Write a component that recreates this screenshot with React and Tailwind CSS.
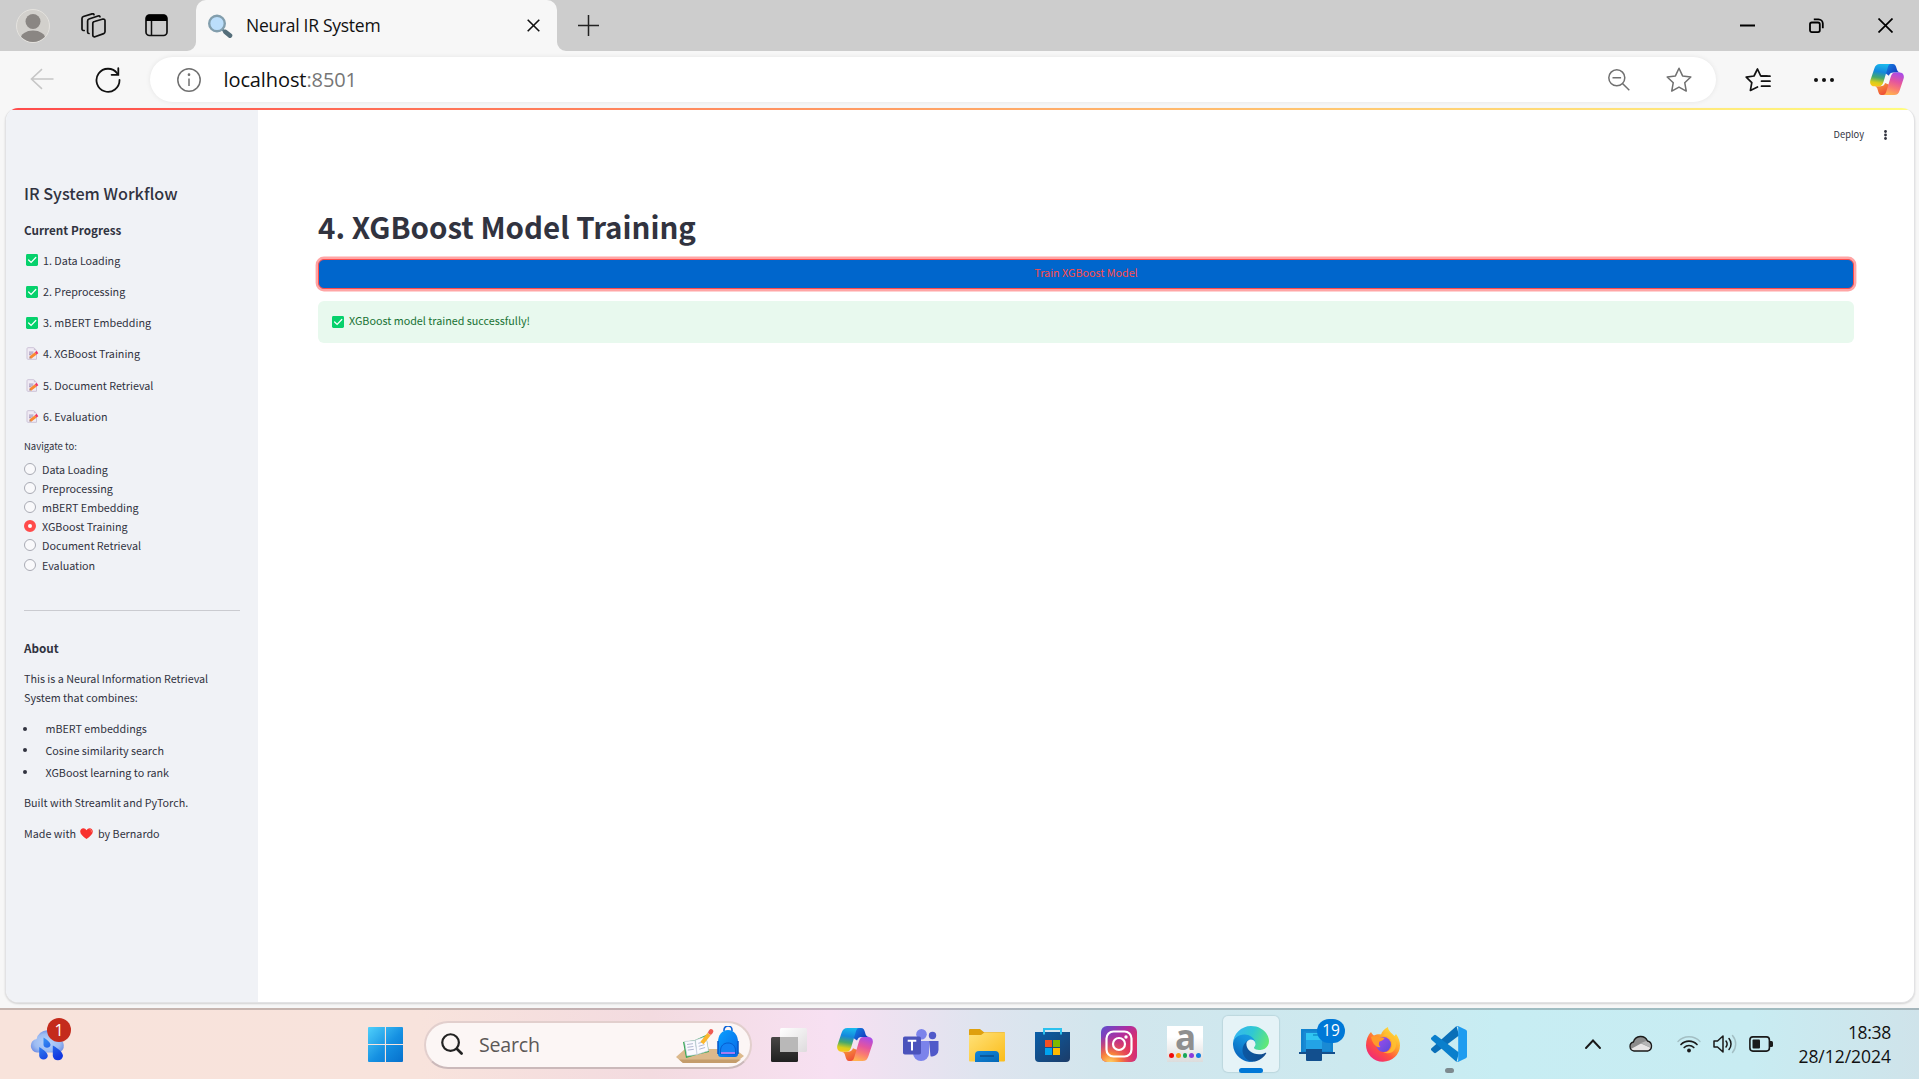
import React from "react";

const SANS = "font-['Noto_Sans_CJK_SC',sans-serif]";
const UI = "font-['Open_Sans',sans-serif]";

function Copilot({ id, className }) {
  return (
    <svg viewBox="0 0 36 34" className={className} preserveAspectRatio="none">
      <defs>
        <linearGradient id={id + "a"} x1="0.55" y1="0" x2="0.4" y2="1">
          <stop offset="0" stopColor="#1ab8ec" />
          <stop offset="0.35" stopColor="#1488dc" />
          <stop offset="0.62" stopColor="#46a86c" />
          <stop offset="0.85" stopColor="#d8ce1c" />
          <stop offset="1" stopColor="#f7c81a" />
        </linearGradient>
        <linearGradient id={id + "b"} x1="0.7" y1="0" x2="0.4" y2="1">
          <stop offset="0" stopColor="#a94be8" />
          <stop offset="0.4" stopColor="#e4559f" />
          <stop offset="0.7" stopColor="#fa7b72" />
          <stop offset="1" stopColor="#ffb152" />
        </linearGradient>
        <linearGradient id={id + "c"} x1="0" y1="0" x2="1" y2="0.7">
          <stop offset="0" stopColor="#1488e8" />
          <stop offset="1" stopColor="#1433b8" />
        </linearGradient>
        <linearGradient id={id + "d"} x1="0" y1="0" x2="0.7" y2="1">
          <stop offset="0" stopColor="#f8a43a" />
          <stop offset="1" stopColor="#ee4a38" />
        </linearGradient>
      </defs>
      <path d="M17 0h7c2.600 0 3.400 2 4 4.500.8 3 1.200 4.500 4 4.800h-7c-3 0-4 1.200-5 3.500L16 10z" fill={`url(#${id}c)`} />
      <path d="M19 34h-7c-2 0-2.800-2-3.500-4.500C7.700 26 7 24.600 4 24.400h7c3 0 4-1.200 5-3.500l5 2z" fill={`url(#${id}d)`} />
      <path d="M10.500 0H22c-2 0-2.700 2-3.400 4.600l-4.300 15c-1 3.200-2 4.900-4.800 4.900H5c-3.800 0-5.600-2.600-4.600-6.700L4.600 5C5.600 1.800 7.200 0 10.500 0z" fill={`url(#${id}a)`} />
      <path d="M25.500 34H14c2 0 2.800-2 3.500-4.600l4.300-15c1-3.300 2-5.100 4.700-5.100H31c3.800 0 5.600 2.600 4.600 6.700L31.400 29c-1 3.300-2.600 5-5.900 5z" fill={`url(#${id}b)`} />
    </svg>
  );
}

function TabStrip() {
  return (
    <div className="flex h-[51px] bg-[#cdcdcd]">
      <div className="flex w-[196px] items-center">
        <svg className="ml-4 h-[34px] w-[34px]" viewBox="0 0 34 34">
          <clipPath id="av"><circle cx="17" cy="17" r="16" /></clipPath>
          <circle cx="17" cy="17" r="16.500" fill="#d2d0cc" stroke="#e4e2de" />
          <g clipPath="url(#av)" fill="#8a8683">
            <ellipse cx="17" cy="12.500" rx="7.500" ry="7.500" />
            <ellipse cx="17" cy="30" rx="12.500" ry="8.500" />
          </g>
        </svg>
        <svg className="ml-[30.500px] size-[25px]" viewBox="0 0 25 25" fill="none" stroke="#111" strokeWidth="1.700" strokeLinecap="round" strokeLinejoin="round">
          <path d="M13.500 8.500 22 6a1.800 1.800 0 0 1 2 1.800v11a2 2 0 0 1-1.300 1.800L14 23.700a1.600 1.600 0 0 1-2.200-1.500V10.600a2 2 0 0 1 1.700-2.100z" />
          <path d="M8 20.500c-.8 0-1.400-.6-1.400-1.500V8c0-1 .5-1.700 1.400-2l9-3c1-.3 1.700 0 2 .8" />
          <path d="M3.200 17.500C1.600 17.500 1 17 1 16V5.500c0-1 .5-1.700 1.400-2L11 .9c1-.3 1.800 0 2 .8" />
        </svg>
        <svg className="ml-[39px] size-[23px]" viewBox="0 0 23 23">
          <rect x="1" y="1" width="21" height="20.500" rx="3.500" fill="none" stroke="#111" strokeWidth="1.700" />
          <path d="M1 7V4a3.500 3.500 0 0 1 3.500-3.500h14A3.500 3.500 0 0 1 22 4v3z" fill="#000" />
          <path d="M6.500 7v14" stroke="#111" strokeWidth="1.500" />
        </svg>
      </div>
      <div className="relative flex w-[361px] items-center rounded-t-[10px] bg-[#f7f7f7]">
        <svg className="absolute -left-[9px] bottom-0 size-[9px]" viewBox="0 0 9 9"><path d="M9 0v9H0a9 9 0 0 0 9-9z" fill="#f7f7f7" /></svg>
        <svg className="absolute -right-[9px] bottom-0 size-[9px]" viewBox="0 0 9 9"><path d="M0 0v9h9a9 9 0 0 1-9-9z" fill="#f7f7f7" /></svg>
        <svg className="ml-3 h-[24px] w-[25px]" viewBox="0 0 25 24">
          <path d="m13.500 14.500 3 3" stroke="#607d8b" strokeWidth="2.500" />
          <path d="m17.500 18 4.500 3.600" stroke="#546e7a" strokeWidth="4.600" strokeLinecap="round" />
          <circle cx="9" cy="9.500" r="7.800" fill="#bbdefb" stroke="#829ead" strokeWidth="2.400" />
        </svg>
        <span className={`${UI} ml-[13px] w-[281px] text-[17.5px] leading-none tracking-[-0.28px] text-[#111]`}>Neural IR System</span>
        <svg className="mr-[16px] size-[13px] shrink-0" viewBox="0 0 13 13"><path d="m.7.7 11.600 11.600M12.300.7.7 12.300" stroke="#111" strokeWidth="1.600" /></svg>
      </div>
      <div className="flex flex-1 items-center">
        <svg className="mb-px ml-[21px] size-[21px]" viewBox="0 0 21 21"><path d="M10.500 0v21M0 10.500h21" stroke="#222" strokeWidth="1.500" /></svg>
        <svg className="ml-auto h-[15px] w-[15px]" viewBox="0 0 15 15"><path d="M0 7.500h15" stroke="#000" strokeWidth="2" /></svg>
        <svg className="ml-[54px] size-[15px]" viewBox="0 0 15 15" fill="none" stroke="#000" strokeWidth="1.800">
          <rect x="1" y="4.500" width="9.800" height="9.600" rx="1.800" />
          <path d="M4.800 1.300h4.700a4.300 4.300 0 0 1 4.300 4.300v4.700" />
        </svg>
        <svg className="mr-[26px] ml-[54px] size-[15px]" viewBox="0 0 15 15"><path d="m.5.500 14 14m0-14-14 14" stroke="#000" strokeWidth="1.700" /></svg>
      </div>
    </div>
  );
}

const STAR = "M12 1.200l3.300 7 7.600 1-5.600 5.300 1.400 7.700L12 18.500l-6.700 3.700 1.400-7.700L1.100 9.200l7.600-1z";

function Toolbar() {
  return (
    <div className="flex h-[57px] items-center bg-[#f7f7f7]">
      <svg className="mb-[2px] ml-[30px] h-[22px] w-[24px]" viewBox="0 0 25 22" fill="none" stroke="#c6c6c6" strokeWidth="1.600"><path d="M24.500 11H1.500M12.500.700 1.500 11l11 10.300" /></svg>
      <svg className="ml-[41px] size-[26px]" viewBox="0 0 26 26" fill="none" stroke="#111" strokeWidth="1.800" strokeLinecap="round">
        <path d="M22.300 6.500A11.500 11.500 0 1 0 24.500 13" />
        <path d="M23.300 1.200v6.600h-6.700" />
      </svg>
      <div className="ml-[29px] flex h-[45px] w-[1566px] items-center rounded-full bg-white shadow-[0_0_5px_rgba(0,0,0,0.08)]">
        <svg className="ml-[27px] size-[24px]" viewBox="0 0 24 24" fill="none" stroke="#707070" strokeWidth="1.500">
          <circle cx="12" cy="12" r="11.200" /><path d="M12 10.500v7.500" /><circle cx="12" cy="6.700" r=".6" fill="#707070" />
        </svg>
        <span className={`${UI} ml-[22.500px] text-[20px] leading-none tracking-[-0.1px] text-[#111]`}>localhost<span className="text-[#767676]">:8501</span></span>
        <svg className="ml-auto size-[22px]" viewBox="0 0 22 22" fill="none" stroke="#707070" strokeWidth="1.500">
          <circle cx="8.800" cy="8.800" r="8" /><path d="M4.500 8.700h8.600M14.500 14.500l6.800 6.700" />
        </svg>
        <svg className="mr-[24.500px] ml-[36px] size-[26px]" viewBox="0 0 24 24" fill="none" stroke="#707070" strokeWidth="1.400" strokeLinejoin="round"><path d={STAR} /></svg>
      </div>
      <svg className="ml-[29px] h-[24px] w-[26px]" viewBox="0 0 26 24" fill="none" stroke="#111" strokeWidth="1.700" strokeLinejoin="round" strokeLinecap="round">
        <path d="M22 8h-6.300L12.500 1 9 8l-7.800 1.200 5.600 5.400-1.400 7.800L12.500 19" />
        <path d="M16.500 8.200H25M16.500 13.200H25M16.500 18.200H25" />
      </svg>
      <svg className="ml-[43px] h-[4px] w-[20px]" viewBox="0 0 20 4" fill="#111"><circle cx="2" cy="2" r="2" /><circle cx="10" cy="2" r="2" /><circle cx="18" cy="2" r="2" /></svg>
      <Copilot id="tb" className="ml-[36px] h-[31px] w-[34px]" />
    </div>
  );
}

function Check() {
  return (
    <svg className="size-[12px] shrink-0" viewBox="0 0 12 12">
      <rect width="12" height="12" rx="1.400" fill="#06d16c" />
      <path d="m2.600 6 2.500 2.500 4.700-5" fill="none" stroke="#fff" strokeWidth="1.200" strokeLinecap="round" />
    </svg>
  );
}

function Memo() {
  return (
    <svg className="size-[13px] shrink-0" viewBox="0 0 13 13">
      <path d="M2 .7h5.800L10.500 3.300v9H2a1 1 0 0 1-1-1v-9.600a1 1 0 0 1 1-1z" fill="#f0ebf4" stroke="#cdc4d8" strokeWidth="1" />
      <path d="M7.800.7v2.600h2.700z" fill="#cdc5d8" />
      <path d="M3 5h4.500M3 6.300h4M3 7.600h2.500" stroke="#b0a4c2" strokeWidth="1.100" />
      <path d="m4.300 10.600 5.500-4.300" stroke="#f98a30" strokeWidth="2.900" />
      <path d="m9.700 6.400 1.800-1.400" stroke="#f0386b" strokeWidth="2.900" />
      <path d="M3.400 11.500l.3-1.800 1.400 1.500z" fill="#8b5f4a" />
    </svg>
  );
}

const STEPS = [
  ["1. Data Loading", true],
  ["2. Preprocessing", true],
  ["3. mBERT Embedding", true],
  ["4. XGBoost Training", false],
  ["5. Document Retrieval", false],
  ["6. Evaluation", false],
];
const PAGES = ["Data Loading", "Preprocessing", "mBERT Embedding", "XGBoost Training", "Document Retrieval", "Evaluation"];
const FEATURES = ["mBERT embeddings", "Cosine similarity search", "XGBoost learning to rank"];

function Sidebar() {
  return (
    <aside className="h-full w-[252px] shrink-0 bg-[#f0f2f6] pt-[68px] pr-[18px] pl-[18px] text-[10.75px] leading-[19px] text-[#31333f]">
      <h2 className="h-[30px] text-[16.2px] leading-[30px] font-medium whitespace-nowrap">IR System Workflow</h2>
      <h3 className="mt-[7px] h-[30px] text-[11.7px] leading-[30px] font-bold">Current Progress</h3>
      <ul className="-mt-[0.2px] flex flex-col">
        {STEPS.map(([t, done]) => (
          <li key={t} className="flex h-[31.2px] items-center whitespace-nowrap">
            <span className="ml-[2px] flex w-[17px]">{done ? <Check /> : <Memo />}</span>
            {t}
          </li>
        ))}
      </ul>
      <p className="mt-[2.400px] h-[24px] text-[9.5px] leading-[24px]">Navigate to:</p>
      <div className="mt-[0.8px] flex flex-col">
        {PAGES.map((t) => (
          <label key={t} className="flex h-[19.2px] items-center whitespace-nowrap">
            {t === "XGBoost Training" ? (
              <span className="mr-[6px] size-[12px] rounded-full border-4 border-[#ff4b4b] bg-white" />
            ) : (
              <span className="mr-[6px] size-[12px] rounded-full border border-[#a9abb4] bg-[#f9f9fb]" />
            )}
            <span className="pt-[1px]">{t}</span>
          </label>
        ))}
      </div>
      <hr className="mt-[35.800px] border-t border-[#cacbd0]" />
      <h3 className="mt-[22px] h-[30px] text-[11.7px] leading-[30px] font-bold">About</h3>
      <p className="mt-[6px] whitespace-nowrap">This is a Neural Information Retrieval<br />System that combines:</p>
      <ul className="mt-[11px] flex flex-col">
        {FEATURES.map((t) => (
          <li key={t} className="flex h-[21.6px] items-center whitespace-nowrap">
            <span className="mr-[18.5px] -ml-px size-[4px] rounded-full bg-[#31333f]" />
            {t}
          </li>
        ))}
      </ul>
      <p className="mt-[10.600px]">Built with Streamlit and PyTorch.</p>
      <p className="mt-[12px] flex items-center">
        Made with
        <svg className="mr-[5px] ml-[4px] h-[11px] w-[13px]" viewBox="0 0 13 11"><path d="M6.500 11C3 8.500.2 6 .2 3.400.2 1.500 1.600.2 3.300.2c1.300 0 2.500.7 3.200 2C7.200.9 8.400.2 9.700.2c1.700 0 3.100 1.300 3.100 3.200C12.800 6 10 8.500 6.500 11z" fill="#f8312f" /><path d="M9.500 1.200c1.600.2 2.200 1.400 1.800 3" stroke="#ff7a6e" fill="none" /></svg>
        by Bernardo
      </p>
    </aside>
  );
}

function Page() {
  return (
    <div className="h-[900px] bg-[#f7f7f7] pr-[4px] pl-[5px]">
      <div className={`${SANS} flex h-[895px] flex-col overflow-hidden rounded-[13px] border-x border-b border-[#e2e2e4] bg-white shadow-[0_1px_2px_rgba(0,0,0,0.15)]`}>
        <div className="h-[2px] shrink-0 bg-[linear-gradient(90deg,#ff4b4b,#fffd80)]" />
        <div className="flex min-h-0 flex-1">
          <Sidebar />
          <main className="flex flex-1 flex-col text-[#31333f]">
            <div className="flex h-[50px] items-center justify-end">
              <span className="text-[9.3px] leading-none">Deploy</span>
              <svg className="mr-[27px] ml-[20px] h-[10px] w-[3px]" viewBox="0 0 3 10" fill="#31333f"><circle cx="1.500" cy="1.500" r="1.400" /><circle cx="1.500" cy="5" r="1.400" /><circle cx="1.500" cy="8.500" r="1.400" /></svg>
            </div>
            <div className="flex flex-col pr-[60px] pl-[60px]">
              <h1 className="mt-[41px] h-[50px] text-[29.5px] leading-[50px] font-bold">4. XGBoost Model Training</h1>
              <button className="mt-[8px] h-[30px] rounded-[6px] border border-[#ff4b4b] bg-[#0066cc] pb-[1px] text-[10.75px] leading-none text-[#ff4b4b] shadow-[0_0_0_2.400px_rgba(255,75,75,0.5)]">Train XGBoost Model</button>
              <div className="mt-[12px] flex h-[42px] items-center rounded-[6px] bg-[#e8f9ee] pl-[14px] text-[10.75px] leading-none text-[#177233]">
                <Check />
                <span className="ml-[5px] pb-[1px]">XGBoost model trained successfully!</span>
              </div>
            </div>
          </main>
        </div>
      </div>
    </div>
  );
}

function Slot({ children }) {
  return <div className="relative flex h-full w-[66px] shrink-0 items-center justify-center pt-[2px]">{children}</div>;
}

function Weather() {
  return (
    <div className="relative ml-[29px] h-full w-[45px]">
      <svg className="absolute top-[19px] left-[1px] h-[35px] w-[36px]" viewBox="0 0 36 35">
        <defs>
          <radialGradient id="wc" cx=".5" cy=".55" r=".55"><stop offset="0" stopColor="#b9d3fa" /><stop offset=".7" stopColor="#9dbcf2" /><stop offset="1" stopColor="#7594e6" /></radialGradient>
          <linearGradient id="wd" x1="0" y1="0" x2=".6" y2="1"><stop offset="0" stopColor="#3c9bf5" /><stop offset="1" stopColor="#1237e0" /></linearGradient>
        </defs>
        <path d="M7 25.500a6.800 6.800 0 0 1-.4-13.500A11 11 0 0 1 28 11.500a7.300 7.300 0 0 1 1 14z" fill="url(#wc)" />
        <path d="M13.500 10.500c4.500 3 7 5 7 7.500a3.600 3.600 0 0 1-7 0zM9.200 20c5.500 3.500 8.600 6 8.600 9a4.400 4.400 0 0 1-8.600 0zM22.800 18.500C29 22 33 25.500 33 29a5.200 5.200 0 0 1-10.200 0z" fill="url(#wd)" />
      </svg>
      <span className={`${UI} absolute top-[10px] left-[18px] flex size-[24px] items-center justify-center rounded-full bg-[#c42b1c] text-[16px] leading-none text-white`}>1</span>
    </div>
  );
}

function SearchBox() {
  return (
    <div className="mt-[2px] ml-[6px] flex h-[48px] w-[328px] shrink-0 items-center rounded-full border-2 border-[#e2cfcd] border-b-[#cbb9ba] bg-[#fcf6f5]">
      <svg className="mb-px ml-[15px] size-[22px]" viewBox="0 0 23 23" fill="none" stroke="#222" strokeLinecap="round"><circle cx="10" cy="10" r="8.700" strokeWidth="2.300" /><path d="m16.500 16.500 5 5" strokeWidth="2.800" /></svg>
      <span className={`${UI} ml-[16px] text-[19.6px] leading-none tracking-[-0.2px] text-[#5c5857]`}>Search</span>
      <svg className="mr-[6px] ml-auto h-[38px] w-[68px]" viewBox="0 0 68 38">
        <defs><linearGradient id="bp" x1="0" y1="0" x2="1" y2="1"><stop offset="0" stopColor="#0aa0ff" /><stop offset="1" stopColor="#0768e6" /></linearGradient></defs>
        <path d="M0 31l9-8h50l9 7-9 7H7z" fill="#dcb98c" /><path d="M3 33.500h62L60 37H7z" fill="#c49d6c" />
        <path d="m7 16 12-2 11-5 3 17-11 2.500L10 32z" fill="#35a853" />
        <path d="m8.500 15.500 10.500-1 2 14L11 30zM19.500 14 30 10.500l2.500 14.300L21 28.500z" fill="#fafaff" stroke="#c9cde0" strokeWidth=".6" />
        <path d="m11 18.500 6-.8m-5.600 3.600 6-.8m-5.600 3.600 6-.8m4.500-6 5.800-1.600m-5.400 4.600 5.800-1.700m-5.200 4.600 5.800-1.700" stroke="#9da6c4" strokeWidth=".8" />
        <path d="m26 17 7.500-9.500" stroke="#fbb62c" strokeWidth="4" /><path d="m32.800 8.200 1.600-2" stroke="#ddd" strokeWidth="4" /><path d="m34.400 6.300.7-.9" stroke="#ef5a52" strokeWidth="4.500" strokeLinecap="round" />
        <path d="M48 5V4a4 4 0 0 1 8 0v1" fill="none" stroke="#0a62d8" strokeWidth="1.600" />
        <path d="M42 16c0-7 4-12 10-12s10 5 10 12v12a3 3 0 0 1-3 3H45a3 3 0 0 1-3-3z" fill="url(#bp)" />
        <path d="M44.500 25c0-5 3-8 7.500-8s7.500 3 7.500 8v3h-15z" fill="#1282f5" stroke="#0552c4" strokeWidth=".8" /><path d="M45 27h14" stroke="#b77df2" strokeWidth="1.800" />
        <path d="M42 15v13M62 15v13" stroke="#0456c8" strokeWidth="1.500" />
      </svg>
    </div>
  );
}

function TaskIcons() {
  return (
    <>
      <Slot>
        <svg className="h-[34px] w-[36px]" viewBox="0 0 36 34">
          <defs>
            <linearGradient id="tv1" x1="0" y1="0" x2="0" y2="1"><stop offset="0" stopColor="#484645" /><stop offset="1" stopColor="#202020" /></linearGradient>
            <linearGradient id="tv2" x1="0" y1="0" x2="1" y2="1"><stop offset="0" stopColor="#fff" /><stop offset="1" stopColor="#dedbdd" /></linearGradient>
          </defs>
          <rect x="0" y="9" width="27" height="25" rx="1.500" fill="url(#tv1)" />
          <rect x="9" y="0" width="27" height="24" rx="1.500" fill="url(#tv2)" />
          <rect x="9" y="9" width="18" height="15" fill="#b9b8b8" />
        </svg>
      </Slot>
      <Slot><Copilot id="tk" className="mb-px h-[33px] w-[36px]" /></Slot>
      <Slot>
        <svg className="h-[34px] w-[36px]" viewBox="0 0 36 34">
          <circle cx="29.500" cy="7.500" r="3.700" fill="#5059c9" /><path d="M26 13h9.500v9a6.500 6.500 0 0 1-8 6.300z" fill="#5059c9" />
          <circle cx="18.500" cy="6.300" r="5.300" fill="#7b83eb" /><path d="M10 13h16v12a8 8 0 0 1-16 0z" fill="#7b83eb" />
          <rect x="0" y="8.500" width="18" height="18" rx="1.800" fill="#4b53bc" />
          <path d="M4.700 12.800h8.600M9 12.800V22.500" stroke="#fff" strokeWidth="2" />
        </svg>
      </Slot>
      <Slot>
        <svg className="h-[34px] w-[36px]" viewBox="0 0 36 34">
          <defs><linearGradient id="fe" x1="0" y1="0" x2="1" y2="1"><stop offset="0" stopColor="#ffe27a" /><stop offset="1" stopColor="#fbbc19" /></linearGradient><linearGradient id="fb" x1="0" y1="0" x2="1" y2="1"><stop offset="0" stopColor="#1287dc" /><stop offset="1" stopColor="#0568b6" /></linearGradient></defs>
          <path d="M0 2a1 1 0 0 1 1-1h10l4 3.200h20a1 1 0 0 1 1 1V9H0z" fill="#dfa00e" />
          <path d="M0 7h12l3.500-2.500H36V32.500a1 1 0 0 1-1 1H1a1 1 0 0 1-1-1z" fill="url(#fe)" />
          <path d="M6 34V27a4 4 0 0 1 4-4h16a4 4 0 0 1 4 4v7z" fill="url(#fb)" /><path d="M11 28h14" stroke="#0a4e8c" strokeWidth="1.500" />
        </svg>
      </Slot>
      <Slot>
        <svg className="mr-px h-[36px] w-[35px]" viewBox="0 0 35 36">
          <defs><linearGradient id="ms" x1="0" y1="0" x2="1" y2="1"><stop offset="0" stopColor="#0a5ea8" /><stop offset="1" stopColor="#1c3c68" /></linearGradient></defs>
          <path d="M0 5h35v26a4 4 0 0 1-4 4H4a4 4 0 0 1-4-4z" fill="url(#ms)" />
          <path d="M9 7.500V2h17v5.500" fill="none" stroke="#2bc1ee" strokeWidth="2" />
          <path d="M10 13h7v7h-7z" fill="#f25022" /><path d="M18 13h7v7h-7z" fill="#7fba00" /><path d="M10 21h7v7h-7z" fill="#00a4ef" /><path d="M18 21h7v7h-7z" fill="#ffb900" />
        </svg>
      </Slot>
      <Slot>
        <svg className="mb-px size-[36px]" viewBox="0 0 36 36">
          <defs>
            <linearGradient id="ig" x1="0" y1="0" x2="1" y2="1"><stop offset="0" stopColor="#5b4fd0" /><stop offset=".4" stopColor="#b02da0" /><stop offset=".7" stopColor="#e0305f" /><stop offset="1" stopColor="#c82d8c" /></linearGradient>
            <radialGradient id="ig2" cx=".25" cy="1.050" r=".8"><stop offset="0" stopColor="#ffdc6a" /><stop offset=".35" stopColor="#f9873a" /><stop offset="1" stopColor="#e0305f" stopOpacity="0" /></radialGradient>
          </defs>
          <rect width="36" height="36" rx="6" fill="url(#ig)" /><rect width="36" height="36" rx="6" fill="url(#ig2)" />
          <rect x="5.500" y="5.500" width="25" height="25" rx="7" fill="none" stroke="#fff" strokeWidth="2.200" />
          <circle cx="18" cy="18" r="6" fill="none" stroke="#fff" strokeWidth="2.200" /><circle cx="25" cy="11" r="1.700" fill="#fff" />
        </svg>
      </Slot>
      <Slot>
        <div className="relative mb-px h-[36px] w-[36px] bg-[linear-gradient(180deg,#ffffff_30%,#dcdcdc)]">
          <span className="absolute top-[-7px] left-[8px] font-['Open_Sans',sans-serif] text-[35px] leading-[35px] font-bold text-[#8f8f8f]">a</span>
          <div className="absolute top-[27px] left-[2px] flex gap-[2px]">
            <i className="size-[4.800px] rounded-full bg-[#f00a0a]" /><i className="size-[4.800px] rounded-full bg-[#f59b14]" /><i className="size-[4.800px] rounded-full bg-[#17a858]" /><i className="size-[4.800px] rounded-full bg-[#8b3bdc]" /><i className="size-[4.800px] rounded-full bg-[#117ee0]" />
          </div>
        </div>
      </Slot>
      <Slot>
        <div className="mb-px flex h-[56px] w-[56px] items-center justify-center rounded-[5px] bg-[#e5f3f7] shadow-[0_0_1px_1px_rgba(120,150,160,0.2)]">
          <svg className="size-[36px]" viewBox="0 0 256 256">
            <defs>
              <linearGradient id="e1" x1="60" y1="177" x2="240" y2="177" gradientUnits="userSpaceOnUse"><stop offset="0" stopColor="#0c59a4" /><stop offset="1" stopColor="#114a8b" /></linearGradient>
              <linearGradient id="e2" x1="150" y1="60" x2="45" y2="230" gradientUnits="userSpaceOnUse"><stop offset="0" stopColor="#1b9de2" /><stop offset=".3" stopColor="#1595df" /><stop offset="1" stopColor="#0a66bd" /></linearGradient>
              <linearGradient id="e3" x1="20" y1="40" x2="250" y2="140" gradientUnits="userSpaceOnUse"><stop offset="0" stopColor="#34b6f0" /><stop offset=".45" stopColor="#30c8d2" /><stop offset="1" stopColor="#66eb6e" /></linearGradient>
            </defs>
            <path fill="url(#e1)" d="M231.100 190.500c-3.400 1.800-6.900 3.400-10.500 4.700-11.600 4.300-23.800 6.500-36.200 6.500-47.700 0-89.300-32.800-89.300-75 .1-11.500 6.400-22.100 16.500-27.700-43.200 1.800-54.300 46.800-54.300 73.100 0 74.600 68.700 82.100 83.500 82.100 8 0 20-2.300 27.200-4.600l1.300-.4c27.600-9.500 51-28.100 66.600-52.800 1.100-1.900.5-4.300-1.300-5.400-1.100-.7-2.400-.7-3.500-.5z" />
            <path fill="url(#e2)" d="M105.700 241.400c-9-5.600-16.800-12.900-22.900-21.600-26.300-36-18.400-86.500 17.600-112.800 3.800-2.700 7.700-5.200 11.900-7.200 3.100-1.500 8.400-4.100 15.500-4 10.100.1 19.600 4.900 25.700 13 4 5.400 6.300 11.900 6.400 18.700 0-.2 24.500-79.600-80-79.600-43.900 0-80 41.600-80 78.200-.2 19.300 4 38.500 12.100 56 27.600 58.800 94.800 87.600 156.400 67.100-21.100 6.600-44.100 3.700-62.700-7.800z" />
            <path fill="url(#e3)" d="M152.300 148.900c-.8 1-3.300 2.500-3.300 5.700 0 2.600 1.700 5.100 4.700 7.200 14.400 10 41.500 8.700 41.600 8.700 10.700 0 21.100-2.900 30.300-8.300 18.800-11 30.400-31.100 30.400-52.900.3-22.400-8-37.300-11.300-43.900C223.500 23.900 177.700 0 128 0 58 0 1 56.200 0 126.200c.5-36.500 36.800-66 80-66 3.500 0 23.500.3 42 10.100 16.300 8.600 24.900 18.900 30.800 29.200 6.200 10.700 7.300 24.100 7.300 29.500-.1 5.400-2.800 13.300-7.800 19.900z" />
          </svg>
        </div>
        <span className="absolute bottom-[6px] left-[21px] h-[5px] w-[24px] rounded-full bg-[#0078d7]" />
      </Slot>
      <Slot>
        <svg className="h-[32px] w-[36px]" viewBox="0 0 36 32">
          <path d="M2 0h32v24H2z" fill="#1183cf" /><path d="M4.500 2.500h27V22h-27z" fill="#1a8ad4" /><path d="M0 23h36v2H0z" fill="#144f8c" />
          <path d="M7 4h16v7H7z" fill="#30c5f2" /><path d="M7 11h16v9H7z" fill="#23a3e6" /><path d="M7 20h16v11a1 1 0 0 1-1 1H8a1 1 0 0 1-1-1z" fill="#124f8e" /><path d="M14 6h6" stroke="#0a86c4" strokeWidth="1.200" />
        </svg>
        <span className={`${UI} absolute top-[11px] right-[5px] flex h-[24px] w-[28px] items-center justify-center rounded-full bg-[#0078d7] text-[15.500px] leading-none text-white`}>19</span>
      </Slot>
      <Slot>
        <svg className="mb-px h-[35px] w-[34px]" viewBox="0 0 34 35">
          <defs>
            <linearGradient id="ff1" x1=".85" y1=".1" x2=".2" y2=".95"><stop offset="0" stopColor="#ffe13a" /><stop offset=".35" stopColor="#ffa22e" /><stop offset=".65" stopColor="#ff5140" /><stop offset="1" stopColor="#f0287a" /></linearGradient>
            <linearGradient id="ff2" x1="0" y1="0" x2="1" y2="1"><stop offset="0" stopColor="#a44cf0" /><stop offset="1" stopColor="#5a4bd8" /></linearGradient>
          </defs>
          <path d="M5 5c1 2 2 3 3 3.500C10 7.500 13 7 15 7.500c1-3 3.500-6 7-7.500 0 4 4 6 6.500 9l1.500-2c3 4 4 8 4 11.500A17 16.500 0 0 1 0 18c0-5 2-10 5-13z" fill="url(#ff1)" />
          <circle cx="17.500" cy="17.500" r="7.500" fill="url(#ff2)" />
          <path d="M5 10c2-1.500 5-1.500 8 0l5.500 1c-.5 2-3 3-5 3.500-1 2-1 4 1 5.500-4 1-8-3-9.500-10z" fill="#ff9a2b" />
          <path d="M17 9c5-1 9 2 9 8 0 5-4 8.500-9 8.500 9 3 14-3 13-10C28 10 25 7 22 5c-2 1-4 2-5 4z" fill="#ffc230" opacity=".8" />
        </svg>
      </Slot>
      <Slot>
        <svg className="mb-px size-[36px]" viewBox="0 0 36 36">
          <path d="M25.500 0 28 9.500 5 26.700a1.500 1.500 0 0 1-2 0L.5 24.500a1.500 1.500 0 0 1 0-2.200z" fill="#0a6fb8" />
          <path d="M25.500 36 28 26.500 5 9.300a1.500 1.500 0 0 0-2 0L.5 11.500a1.500 1.500 0 0 0 0 2.200z" fill="#0a7fcc" />
          <path d="M25.500.2C26 0 27 0 27.500.3l7.300 3.500A2 2 0 0 1 36 5.600v24.800a2 2 0 0 1-1.200 1.800l-7.300 3.500c-.6.300-1.500.3-2 .1 1 0 1.700-.8 1.700-1.800V2c0-1-.7-1.800-1.700-1.800z" fill="#1f9cf0" />
        </svg>
        <span className="absolute bottom-[6px] left-[29px] h-[5px] w-[9px] rounded-full bg-[#7d8a8f]" />
      </Slot>
    </>
  );
}

function Tray() {
  return (
    <div className="ml-auto flex h-full items-center text-[#111]">
      <svg className="mr-[28px] h-[10px] w-[16px]" viewBox="0 0 16 10"><path d="m1 9 7-7.500L15 9" fill="none" stroke="#1a1a1a" strokeWidth="1.900" strokeLinecap="round" /></svg>
      <svg className="mr-[24px] h-[17px] w-[24px]" viewBox="0 0 24 17">
        <clipPath id="cl"><path d="M5 16a4.600 4.600 0 0 1-.6-9A7.500 7.500 0 0 1 18.500 6 5.200 5.200 0 0 1 19 16z" /></clipPath>
        <g clipPath="url(#cl)"><path d="M0 0h24v17H0z" fill="#8c8c8c" /><path d="m24 3-12 5 12 6z" fill="#b5b5b5" /><path d="m0 15 12-6.500L24 14v3H0z" fill="#e8e6e6" /></g>
        <path d="M5 16a4.600 4.600 0 0 1-.6-9A7.500 7.500 0 0 1 18.500 6 5.200 5.200 0 0 1 19 16z" fill="none" stroke="#1a1a1a" strokeWidth="1.300" />
      </svg>
      <svg className="mr-[12px] h-[18px] w-[24px]" viewBox="0 0 24 18" fill="none" strokeLinecap="round" strokeWidth="1.700">
        <path d="M1 6.500a15 15 0 0 1 22 0" stroke="#a3bfc4" strokeWidth="1.400" />
        <path d="M4 9.500a11 11 0 0 1 16 0M7.200 12.500a6.800 6.800 0 0 1 9.600 0" stroke="#1a1a1a" /><circle cx="12" cy="15.500" r="1.900" fill="#1a1a1a" />
      </svg>
      <svg className="mr-[12px] h-[20px] w-[24px]" viewBox="0 0 24 20" fill="none" stroke="#1a1a1a" strokeWidth="1.500" strokeLinejoin="round" strokeLinecap="round">
        <path d="M1 7v6h3.500l5.500 5V2L4.500 7z" /><path d="M13 7a5 5 0 0 1 0 6M16 4.500a8.500 8.500 0 0 1 0 11" /><path d="M19.500 1.500a13 13 0 0 1 0 17" stroke="#a3bfc4" />
      </svg>
      <svg className="mr-[25px] h-[16px] w-[24px]" viewBox="0 0 24 16"><rect x=".9" y=".9" width="19.500" height="14.200" rx="3" fill="none" stroke="#1a1a1a" strokeWidth="1.600" /><rect x="3.500" y="3.500" width="7.500" height="9" rx="1" fill="#1a1a1a" /><path d="M21 5h1.500a1.500 1.500 0 0 1 1.500 1.500v3a1.500 1.500 0 0 1-1.500 1.500H21z" fill="#1a1a1a" /></svg>
      <div className={`${UI} mr-[28px] flex w-[93px] flex-col items-end text-[17.500px] leading-[24px] tracking-[-0.03px] whitespace-nowrap`}>
        <span className="tracking-[-0.3px]">18:38</span>
        <span>28/12/2024</span>
      </div>
    </div>
  );
}

export default function App() {
  return (
    <div className="h-[1079px] w-[1919px] overflow-hidden bg-[#f7f7f7]">
      <TabStrip />
      <Toolbar />
      <Page />
      <div className="relative flex h-[71px] items-center bg-[linear-gradient(90deg,#f8e3db_0,#f8e3dc_420px,#f3dbe0_650px,#f7e0f2_830px,#dfe4ef_980px,#d2e6ed_1100px,#cce9ef_1350px,#c7edf3_1500px,#c8ecf2_1750px,#cfe3ea_1919px)]">
        <div className="absolute inset-x-0 top-0 h-[2px] bg-black/20" />
        <Weather />
        <div className="ml-[278px] flex h-full items-center">
          <Slot>
            <svg className="size-[35px]" viewBox="0 0 35 35">
              <defs><linearGradient id="win" x1="0" y1="0" x2="35" y2="35" gradientUnits="userSpaceOnUse"><stop offset="0" stopColor="#4fd0fb" /><stop offset=".55" stopColor="#1590e2" /><stop offset="1" stopColor="#0670cc" /></linearGradient></defs>
              <path d="M1 0h15.900v16.900H0V1a1 1 0 0 1 1-1zM18 0h16a1 1 0 0 1 1 1v15.900H18zM0 18h16.900v17H1a1 1 0 0 1-1-1zM18 18h17v16a1 1 0 0 1-1 1H18z" fill="url(#win)" />
            </svg>
          </Slot>
          <SearchBox />
          <div className="ml-[4px] flex h-full items-center"><TaskIcons /></div>
        </div>
        <Tray />
      </div>
    </div>
  );
}
